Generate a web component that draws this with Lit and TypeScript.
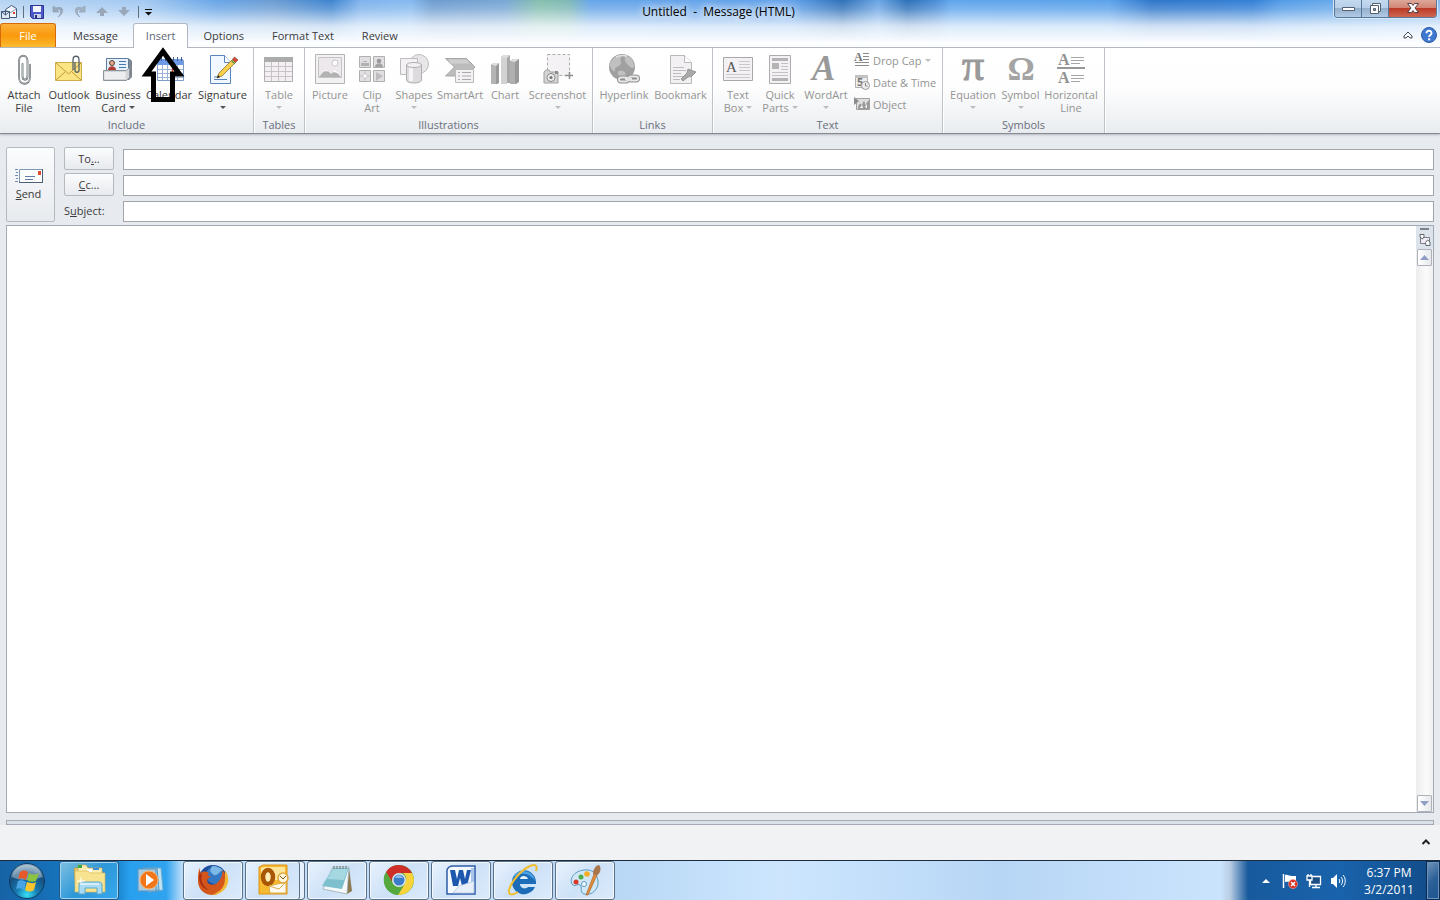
import { LitElement, html, css, svg, nothing } from "lit";
import { customElement, property } from "lit/decorators.js";
import { classMap } from "lit/directives/class-map.js";

/* 32px ribbon icons, 16px row icons */
const icons: Record<string, unknown> = {
  attach: svg`<g fill="none" stroke-linecap="round"><path d="M14.500 11v12c0 5 5 5 5 0V8c0-7-8.500-7-8.500 0v16c0 9 11 9 11 0V12" stroke="#5d6469" stroke-width="1.800"/><path d="M14.500 11v12c0 5 5 5 5 0V8c0-7-8.500-7-8.500 0v16c0 9 11 9 11 0V12" stroke="#d5dadd" stroke-width=".7"/></g>`,
  outlook: svg`<path d="M2.500 9.500h26v18h-26z" fill="#fbe583" stroke="#d0ac4a"/><path d="M3 10l12.500 11L28 10M3 27l9-8M28 27l-9-8" fill="none" stroke="#c09a3a"/><path d="M22 9v8c0 3 4 3 4 0V7c0-5-6-5-6 0v10" fill="none" stroke="#56616b" stroke-width="1.300"/>`,
  card: svg`<path d="M6 6h22l2 2v16l-3 3H9z" fill="#7e8790"/><path d="M4.500 5.500h22v16h-22z" fill="#e4f0fb" stroke="#5f7c9c"/><circle cx="10" cy="10" r="2.500" fill="#e0a488" stroke="#5b4438"/><path d="M6 17c0-5 8-5 8 0z" fill="#b43c34"/><path d="M17 8.500h7M17 11.500h7M17 14.500h7" stroke="#4a77ad"/><path d="M1.500 17.500h23l3-3v10l-3 3h-23z" fill="#d3d6d9" stroke="#8d949a"/><path d="M2.500 19h21v7h-21z" fill="#eceeef"/>`,
  calendar: svg`<path d="M4.500 7.500h26v20h-26z" fill="#fff" stroke="#7f9bc9"/><path d="M5 6h25v6H5z" fill="#6d9be6"/><path d="M5 16.500h25M5 20.500h25M5 24.500h25M9.500 12v15M14.500 12v15M19.500 12v15M24.500 12v15" stroke="#9cb2d4"/><path d="M8.500 4v4M12.500 4v4M16.500 4v4M20.500 4v4M24.500 4v4M28.500 4v4" stroke="#445f96"/><path d="M19.500 16.500h5v4h-5z" fill="#fff" stroke="#e0492f" stroke-width="1.500"/>`,
  signature: svg`<path d="M3.500 2.500h14l6 7v21h-20z" fill="#f2f8ff" stroke="#5c84bd"/><path d="M17.500 2.500v7h6" fill="#fff" stroke="#5c84bd"/><path d="M7 26.500h13M7 24h5" stroke="#5c84bd"/><path d="M10 25l2-5L26 6l3 3-14 14z" fill="#f8d04e" stroke="#93722c" stroke-width=".8"/><path d="M25.500 6.500l2-2.500 3.500 3-2.500 2.500z" fill="#d6483c" stroke="#8a4b2f" stroke-width=".7"/><path d="M24.500 7.500l3 3" stroke="#4d8d5e" stroke-width="1.300"/><path d="M10 25l1-3 2 2z" fill="#222"/>`,
  table: svg`<path d="M1.500 5.500h28v23h-28z" fill="#f3eff2" stroke="#b0b0b0"/><path d="M1 4h29v5H1z" fill="#ababab"/><path d="M2 13.500h27M2 18.500h27M2 23.500h27M8.500 9v19M15.500 9v19M22.500 9v19" stroke="#c6c3c6"/>`,
  picture: svg`<path d="M1.500 1.500h29v29h-29z" fill="#f4f1f4" stroke="#b4b4b4"/><path d="M4.500 4.500h23v20h-23z" fill="#ece8ec" stroke="#c4c4c4"/><circle cx="21" cy="10" r="3" fill="#fff" stroke="#c8c8c8"/><path d="M5 24l7-8 5 5 4-3 6 6z" fill="#b2b2b2"/><path d="M9 19l3-3 3 3-3-1zM19 19l2-2 3 3z" fill="#fff"/>`,
  clip: svg`<g fill="#e2dfe2" stroke="#b0b0b0"><path d="M3.500 3.500h11v11h-11zM17.500 3.500h11v11h-11zM3.500 17.500h11v11h-11zM17.500 17.500h11v11h-11z"/></g><path d="M5 10h8v3H5zM7 8h4v1H7z" fill="#b0b0b0"/><circle cx="23" cy="8" r="2.300" fill="#999"/><path d="M19 14c0-5 8-5 8 0z" fill="#a3a3a3"/><path d="M9 18.500l1 3.500 3.500 1-3.500 1-1 3.500-1-3.500-3.500-1 3.500-1z" fill="#fff" stroke="#aaa" stroke-width=".5"/><path d="M20 19l7 4-7 5z" fill="#bcbcbc"/>`,
  shapes: svg`<circle cx="21" cy="11" r="9.500" fill="#e9e6e9" stroke="#bcbcbc"/><path d="M2.500 5.500h17v16h-17z" fill="#f4f1f4" stroke="#bcbcbc"/><path d="M8.500 12v15c0 4 15 4 15 0V12z" fill="#dedbde" stroke="#b0b0b0"/><path d="M11 14v14h4V14z" fill="#f6f4f6"/><ellipse cx="16" cy="12" rx="7.500" ry="2.500" fill="#f3f0f3" stroke="#b0b0b0"/>`,
  smart: svg`<path d="M1.500 5.500h21l8.500 8.500-8 9H1.500l9-9z" fill="#bcbcbc" stroke="#a8a8a8"/><path d="M4 6.500h18l4 4H7z" fill="#cfcfcf"/><path d="M11.500 16.500h18v13h-18z" fill="#f4f1f4" stroke="#bbb"/><path d="M14 19.500h2M18 19.500h9M14 23h2M18 23h9M14 26.500h2M18 26.500h9" stroke="#aaa"/>`,
  chart: svg`<path d="M2 12l3-2h5v20l-2 1H2z" fill="#999"/><path d="M2 13h5v18H2z" fill="#b4b4b4"/><path d="M12 4l3-2h6v28h-9z" fill="#a8a8a8"/><path d="M12 4h6v27h-6z" fill="#d2d2d2"/><path d="M21 8l3-2h6v23l-3 2h-6z" fill="#999"/><path d="M21 8h5v23h-5z" fill="#b0b0b0"/><path d="M2 12l3-2h5l-3 3zM12 4l3-2h6l-3 3zM21 8l3-2h6l-4 3z" fill="#dedede"/>`,
  shot: svg`<path d="M5.500 1.500h22v21h-22z" fill="#f5f2f5" stroke="#adadad" stroke-dasharray="3 2"/><path d="M23 22.500h8M27.500 19v7" stroke="#8f8f8f" stroke-width="1.600"/><path d="M2 19l2-2h3l1 2h8v11H2z" fill="#d4d4d4" stroke="#a0a0a0"/><circle cx="9" cy="24.500" r="4" fill="#eee" stroke="#8a8a8a"/><circle cx="9" cy="24.500" r="1.600" fill="#777"/><path d="M13 18h3v3h-3z" fill="#8e8e8e"/>`,
  link: svg`<circle cx="14" cy="14" r="13" fill="#a0a0a0"/><path d="M5 6c5-5 10-4 8-1s2 4-1 7-5 1-5 5-5-2-5-5 1-4 3-6zM17 3c6 0 9 6 9 10s-4 1-6-1-4-4-3-9zM11 18c5-1 8 2 6 5s-5 3-6 0-2-4 0-5z" fill="#c0c0c0"/><path d="M8 4c4-2 7-2 11-1" stroke="#e2e2e2" fill="none" stroke-width="1.500"/><g fill="none" stroke="#8f8f8f" stroke-width="4"><rect x="11" y="24.500" width="9" height="4" rx="2"/><rect x="21" y="23.500" width="9" height="4" rx="2"/></g><g fill="none" stroke="#e6e6e6" stroke-width="2"><rect x="11" y="24.500" width="9" height="4" rx="2"/><rect x="21" y="23.500" width="9" height="4" rx="2"/><path d="M17 26h7"/></g>`,
  bookmark: svg`<path d="M5.500 2.500h14l7 7v21h-21z" fill="#f3f0f3" stroke="#b9b9b9"/><path d="M19.500 2.500v7h7" fill="#fff" stroke="#b9b9b9"/><path d="M8 14.500h11M8 17.500h13M8 20.500h8M8 23.500h10M8 26.500h7" stroke="#bdbdbd"/><path d="M16 26l6-6 1-4 8 3-4 4-4 1-5 4z" fill="#a9a9a9" stroke="#979797"/>`,
  textbox: svg`<path d="M1.500 4.500h29v23h-29z" fill="#f4f1f4" stroke="#a8a8a8"/><text x="4" y="19" class="serif" font-size="15" fill="#555">A</text><path d="M17 8.500h11M17 11.500h11M17 14.500h11M17 17.500h11M4 21.500h24M4 24.500h24" stroke="#cbc8cb"/>`,
  quick: svg`<path d="M5.500 2.500h21v28h-21z" fill="#f4f1f4" stroke="#adadad"/><path d="M8 5h16v3H8zM8 10h7v6H8zM8 25h16v3H8z" fill="#b4b4b4"/><path d="M17 10.500h7M17 13.500h7M17 16.500h7M8 19.500h16M8 22.500h16" stroke="#c2c2c2"/>`,
  wordart: svg`<text x="2" y="27" class="serif" font-size="35" font-style="italic" font-weight="bold" fill="#999">A</text>`,
  pi: svg`<text x="16" y="27" text-anchor="middle" class="serif" font-size="44" fill="#999" stroke="#999">π</text>`,
  omega: svg`<text x="16" y="27" text-anchor="middle" class="serif" font-size="34" font-weight="bold" fill="#a4a4a4">Ω</text>`,
  hline: svg`<text x="3" y="12" class="serif" font-size="16" font-weight="bold" fill="#929292">A</text><text x="3" y="30" class="serif" font-size="16" font-weight="bold" fill="#929292">A</text><path d="M2 15h28" stroke="#979797" stroke-width="2"/><path d="M16 4.500h13M16 7.500h13M16 10.500h9M16 22.500h13M16 25.500h13M16 28.500h9" stroke="#a6a6a6"/>`,
  dropcap: svg`<text x="0" y="9" class="serif" font-size="12" font-weight="bold" fill="#777">A</text><path d="M9 1.500h6M9 4.500h6M9 7.500h6M1 10.500h14M1 13.500h14" stroke="#8a8a8a"/>`,
  date: svg`<path d="M1.500 1.500h12v12h-12z" fill="#eee" stroke="#b0b0b0"/><path d="M1 1h13v3H1z" fill="#c2c2c2"/><text x="3" y="12" font-size="11" font-weight="bold" fill="#777">5</text><circle cx="11.500" cy="11.500" r="4" fill="#eee" stroke="#9a9a9a"/><path d="M11.500 9v3h2" stroke="#888" fill="none"/>`,
  object: svg`<path d="M2.500 2.500h13v11h-13z" fill="#dedede" stroke="#a0a0a0"/><path d="M0 1l5 4-5 4z" fill="#8c8c8c"/><path d="M4 13c0-5 3-7 4-3 1-6 3-6 3-1l4-5v9z" fill="#9a9a9a"/><path d="M6 12l2-3 1 3zM11 11l2-3v4z" fill="#fff"/>`,
};

type Cmd = { id: string; icon: string; lines: string[]; drop?: boolean; w: number };
type Group = { name: string; enabled?: boolean; cmds: Cmd[]; rows?: Cmd[] };

const groups: Group[] = [
  { name: "Include", enabled: true, cmds: [
    { id: "attach", icon: "attach", lines: ["Attach", "File"], w: 42 },
    { id: "item", icon: "outlook", lines: ["Outlook", "Item"], w: 48 },
    { id: "card", icon: "card", lines: ["Business", "Card"], drop: true, w: 50 },
    { id: "calendar", icon: "calendar", lines: ["Calendar"], w: 52 },
    { id: "signature", icon: "signature", lines: ["Signature"], drop: true, w: 55 },
  ] },
  { name: "Tables", cmds: [{ id: "table", icon: "table", lines: ["Table"], drop: true, w: 44 }] },
  { name: "Illustrations", cmds: [
    { id: "picture", icon: "picture", lines: ["Picture"], w: 44 },
    { id: "clip", icon: "clip", lines: ["Clip", "Art"], w: 40 },
    { id: "shapes", icon: "shapes", lines: ["Shapes"], drop: true, w: 44 },
    { id: "smart", icon: "smart", lines: ["SmartArt"], w: 48 },
    { id: "chart", icon: "chart", lines: ["Chart"], w: 42 },
    { id: "shot", icon: "shot", lines: ["Screenshot"], drop: true, w: 63 },
  ] },
  { name: "Links", cmds: [
    { id: "link", icon: "link", lines: ["Hyperlink"], w: 56 },
    { id: "bookmark", icon: "bookmark", lines: ["Bookmark"], w: 57 },
  ] },
  { name: "Text", cmds: [
    { id: "textbox", icon: "textbox", lines: ["Text", "Box"], drop: true, w: 44 },
    { id: "quick", icon: "quick", lines: ["Quick", "Parts"], drop: true, w: 40 },
    { id: "wordart", icon: "wordart", lines: ["WordArt"], drop: true, w: 52 },
  ], rows: [
    { id: "dropcap", icon: "dropcap", lines: ["Drop Cap"], drop: true, w: 87 },
    { id: "date", icon: "date", lines: ["Date & Time"], w: 87 },
    { id: "object", icon: "object", lines: ["Object"], w: 87 },
  ] },
  { name: "Symbols", cmds: [
    { id: "equation", icon: "pi", lines: ["Equation"], drop: true, w: 54 },
    { id: "symbol", icon: "omega", lines: ["Symbol"], drop: true, w: 41 },
    { id: "hline", icon: "hline", lines: ["Horizontal", "Line"], w: 60 },
  ] },
];

const reset = css`
  * { box-sizing: border-box; }
  button, input { font: inherit; color: inherit; margin: 0; }
  button { padding: 0; border: 0; background: none; }
  svg { display: block; flex: none; overflow: visible; }
`;

@customElement("ribbon-bar")
export class RibbonBar extends LitElement {
  static styles = [reset, css`
    :host { display: flex; height: 86px; background: linear-gradient(#fff 0, #fefefe 45%, #e9ecef 100%); border-bottom: 1px solid #868b91; box-shadow: 0 1px 2px #b4b9c0; position: relative; }
    .group { display: flex; flex-direction: column; padding: 0 3px; border-right: 1px solid #bec3ca; box-shadow: 1px 0 #fff; color: #949494; }
    .group.on { color: #3b3b3b; }
    .cmds { display: flex; flex: 1; }
    .cmd { display: flex; flex-direction: column; align-items: center; padding-top: 5px; line-height: 13px; white-space: nowrap; }
    .cmd svg { margin-bottom: 3px; }
    .line { display: flex; align-items: center; justify-content: center; gap: 3px; min-height: 13px; }
    .drop { border: 3px solid transparent; border-top-color: #bdbdbd; border-bottom: 0; }
    .on .drop { border-top-color: #555; }
    .rows { display: flex; flex-direction: column; padding-top: 1px; }
    .row { display: flex; align-items: center; gap: 3px; height: 22px; white-space: nowrap; padding-left: 2px; }
    .row .drop { margin-left: 1px; }
    .name { text-align: center; line-height: 17px; color: #6a6f7c; }
    .serif { font-family: "Liberation Serif", serif; }
  `];
  private big(c: Cmd, on: boolean) {
    const last = c.lines.length - 1;
    return html`<button class="cmd" id=${c.id} aria-disabled=${on ? "false" : "true"} style="width:${c.w}px">
      <svg width="32" height="32" viewBox="0 0 32 32" aria-hidden="true">${icons[c.icon]}</svg>
      ${c.lines.map((l, i) => html`<span class="line">${l}${i === last && i > 0 && c.drop ? html`<span class="drop"></span>` : nothing}</span>`)}
      ${last === 0 && c.drop ? html`<span class="line"><span class="drop"></span></span>` : nothing}
    </button>`;
  }
  render() {
    return groups.map((g) => html`<section class=${classMap({ group: true, on: !!g.enabled })} aria-label=${g.name}>
      <div class="cmds">
        ${g.cmds.map((c) => this.big(c, !!g.enabled))}
        ${g.rows ? html`<div class="rows">${g.rows.map((r) => html`<button class="row" id=${r.id} aria-disabled="true" style="width:${r.w}px">
          <svg width="16" height="16" viewBox="0 0 16 16" aria-hidden="true">${icons[r.icon]}</svg>
          <span>${r.lines[0]}</span>${r.drop ? html`<span class="drop"></span>` : nothing}</button>`)}</div>` : nothing}
      </div>
      <div class="name">${g.name}</div>
    </section>`);
  }
}

/* 32px program icons */
const apps: { id: string; label: string; kind: string; art: unknown }[] = [
  { id: "explorer", label: "Windows Explorer", kind: "lit", art: svg`<path d="M1 4h12l2 3h14v20H3z" fill="#e9c868" stroke="#b9963c" stroke-width=".7"/><path d="M5 1h8l2 3h14v20H5z" fill="#fbeeb0" stroke="#cba950" stroke-width=".7"/><path d="M5 1h4v3H5z" fill="#35a947"/><path d="M14 5h5v3h-5z" fill="#fff"/><path d="M20 4h6v2h-6z" fill="#3b8ad6"/><path d="M2 7h13l2 2h15v19H2z" fill="#f8e490" stroke="#d8bb60" stroke-width=".7"/><path d="M6 30V21c0-2 1-3 3-3h17c2 0 3 1 3 3v9h-5v-6H12v6z" fill="#a9dcf4" stroke="#5ba7ce"/><path d="M9 20h17" stroke="#fff"/><path d="M8 13v8M4 17h8" stroke="#fff"/>` },
  { id: "wmp", label: "Windows Media Player", kind: "glow", art: svg`<path d="M12 4h14l2 22-14 2z" fill="#bfe3f6" stroke="#6fa9cb"/><path d="M8 4h14l2 22H8z" fill="#9fd2ef" stroke="#5a9ac2"/><path d="M3 5h18v22H3z" fill="#a9cbe2" stroke="#5b93bb"/><circle cx="14" cy="16" r="9" fill="#f0761a" stroke="#fbb36f"/><path d="M11 10l8 6-8 6z" fill="#fff"/>` },
  { id: "firefox", label: "Firefox", kind: "", art: svg`<circle cx="16" cy="15" r="14" fill="#1f4d9a"/><circle cx="18" cy="11" r="9" fill="#3579c4"/><path d="M15 2c5 0 8 2 11 4-3 1-4 4-7 5s-4-2-6-4z" fill="#7db9e6"/><path d="M3 4c0 3 0 4 1 5 3-3 7-1 8 0-2 1-1 3 2 4-3 1-5 3-3 6 3 3 8 2 10-1 3-3 5-7 4-12 3 3 5 6 5 10 0 8-7 15-14 15C7 31 1 25 1 17c0-5 0-10 2-13z" fill="#d4561b"/><path d="M28 6c5 7 4 15-1 20-4 4-9 5-12 5 8-3 13-8 13-16z" fill="#f2b83a"/><path d="M3 7c0 2 1 3 2 4-2 5 1 12 7 15-7-1-10-8-10-13z" fill="#a92f12"/>` },
  { id: "outlook", label: "Outlook", kind: "stack", art: svg`<path d="M2 3l4-2h24v29H2z" fill="#f6b930" stroke="#dd9414"/><path d="M4 4l3-1h21v13H4z" fill="#fde59a"/><ellipse cx="11" cy="13" rx="5" ry="7" fill="#fdeeb8" stroke="#a95605" stroke-width="4.500"/><path d="M12 22l17-4v11H13z" fill="#fffaf0" stroke="#dfae4c"/><path d="M12 22l10 3 7-7" fill="none" stroke="#dfae4c"/><circle cx="26" cy="14" r="5" fill="#fff5dd" stroke="#e0a63c" stroke-width="1.500"/><path d="M23 12l3 3 3-3" fill="none" stroke="#8a5a14"/>` },
  { id: "notepad", label: "Notepad", kind: "", art: svg`<path d="M28 4l3 23-5 3z" fill="#8b7a52"/><path d="M12 3h16l-2 27L2 25z" fill="#f5f9fa" stroke="#93a1a7" stroke-width=".7"/><path d="M12 4h16l-7 21L1 22z" fill="#7dbfcd"/><path d="M12 5h15l-4 11L6 15z" fill="#a5d8e1"/><path d="M13 2v3M16 2v3M19 2v3M22 2v3M25 2v3" stroke="#6b7479"/>` },
  { id: "chrome", label: "Chrome", kind: "", art: svg`<circle cx="16" cy="16" r="15" fill="#4fae45"/><path d="M10 19.500L3 8A15 15 0 0 1 29 9H16a7 7 0 0 0-6 10z" fill="#cf2e28"/><path d="M29 9a15 15 0 0 1-14 22l7-12a7 7 0 0 0-2-10z" fill="#f8d33b"/><path d="M3 8l7 11.500c2 4 7 4 12 0L15 31A15 15 0 0 1 3 8z" fill="#56a93f"/><circle cx="16" cy="16" r="7" fill="#dfe6ec"/><circle cx="16" cy="16" r="5.500" fill="#3c7cc9"/><path d="M12 14c1-4 7-4 8 0z" fill="#8ab8e8"/>` },
  { id: "word", label: "Word", kind: "", art: svg`<path d="M2 6c1-3 3-4 6-4h22v28H2z" fill="#f4f9fe" stroke="#2d5ca8" stroke-width="1.500"/><path d="M26 4h3v24h-3z" fill="#a9c5ea"/><path d="M5 6h5l2 9 2-9h4l2 9 2-9h4l-4 16h-5l-2-8-2 8H8z" fill="#1d57ae"/><path d="M14 22l15-5v12H8z" fill="#e8eff9" stroke="#9db8dc" stroke-width=".6"/>` },
  { id: "ie", label: "Internet Explorer", kind: "", art: svg`<path d="M29 18a12 12 0 1 0-1 5h-7c-3 3-8 1-8-3h16z" fill="#1d6cb8"/><path d="M28 16a12 12 0 0 0-23-1c5-6 15-7 19-2z" fill="#4ba3e3"/><path d="M13 15c0-4 7-4 8 0z" fill="#e6f3fd"/><path d="M29 7c2-6-1-7-6-5C14 6 4 18 2 26c-1 6 4 5 9 2" fill="none" stroke="#f0bd2d" stroke-width="2"/>` },
  { id: "paint", label: "Paint", kind: "", art: svg`<path d="M15 6C5 7 0 15 3 20c3 4 5-1 8 1s-1 7 4 9c8 2 15-5 14-13S23 5 15 6z" fill="#cfe7f6" stroke="#5d9cc2"/><circle cx="7" cy="18" r="2.500" fill="#d8392b"/><circle cx="12" cy="13" r="2.500" fill="#4cae4a"/><circle cx="18" cy="10" r="2.800" fill="#f4ad25"/><circle cx="15" cy="20" r="2.500" fill="#f4fafe" stroke="#5d9cc2"/><path d="M17 31l8-21 3 1-9 20z" fill="#e08b3e" stroke="#a85f20" stroke-width=".6"/><path d="M24 10c0-5 3-9 6-9 3 3 1 9-2 10z" fill="#a8764a"/>` },
];

@customElement("task-bar")
export class TaskBar extends LitElement {
  @property() clock = "6:37 PM";
  @property() day = "3/2/2011";
  static styles = [reset, css`
    :host { display: flex; height: 40px; border-top: 1px solid #1c2b3d; color: #fff; font-size: 12px;
      background: linear-gradient(90deg, #1762a5 0, #1672bb 58px, #1b86cf 118px, #29a0ee 130px, #2fa3ef 166px, #b8dcf8 182px, #c5defa 300px, #b9d8f5 620px, #cde6fe 780px, #b7d6f5 1000px, #cbe4fd calc(100% - 220px), #b9cde4 calc(100% - 210px), #185a9d calc(100% - 192px), #1963ac calc(100% - 100px), #114a86 100%); }
    .start { width: 59px; padding-left: 9px; }
    .apps { display: flex; flex: 1; gap: 2px; align-items: stretch; }
    .app { width: 60px; border: 1px solid #5c7185; border-radius: 3px; display: flex; align-items: center; justify-content: center; padding-bottom: 2px; background: linear-gradient(135deg, #e8f2fd, #cde1f7 50%, #dcebfc); box-shadow: inset 0 0 0 1px #f2f8ff; }
    .lit { background: linear-gradient(135deg, #7fc0e2, #2d97d8 50%, #37a8ee); box-shadow: inset 0 0 0 1px #9fd5f3; border-color: #225a86; }
    .glow { background: none; border-color: transparent; box-shadow: none; }
    .stack { padding-right: 5px; box-shadow: inset -4px 0 #e6f1fd, inset -5px 0 #5c7185, inset 0 0 0 1px #f2f8ff; }
    .tray { display: flex; align-items: center; gap: 8px; padding-right: 7px; }
    .time { text-align: center; line-height: 17px; width: 60px; margin-left: 5px; }
    .peek { width: 14px; border: 1px solid #0b2c52; background: linear-gradient(135deg, #7396ba, #2c6098 50%, #1c5590); box-shadow: inset 0 0 0 1px #6d93bc; }
  `];
  render() {
    return html`
      <button class="start" aria-label="Start"><svg width="38" height="38" viewBox="0 0 38 38">
        <defs><radialGradient id="orb" cx=".5" cy=".9" r=".9"><stop offset="0" stop-color="#36e0f6"/><stop offset=".35" stop-color="#1779b0"/><stop offset=".7" stop-color="#164f7e"/><stop offset="1" stop-color="#9cb9cb"/></radialGradient></defs>
        <circle cx="18" cy="19" r="17.500" fill="url(#orb)" stroke="#0f3c60"/><path d="M3 15C5-1 31-1 33 15c-8 4-22 4-30 0z" fill="#fff" opacity=".35"/>
        <path d="M11 10c3-2 5-2 8 0l-2 8c-3-2-5-2-8-1z" fill="#e8592a"/><path d="M20 11c3 2 6 2 10 0l-3 8c-3 1-6 1-9-1z" fill="#8cc43f"/><path d="M9 19c3-1 5-1 8 1l-2 8c-3-2-5-2-8-1z" fill="#4aa3e4"/><path d="M18 20c3 1 6 2 9 0l-2 8c-3 2-6 2-9 0z" fill="#fbc52f"/></svg></button>
      <div class="apps">${apps.map((a) => html`<button class="app ${a.kind}" id=${a.id} aria-label=${a.label}><svg width="32" height="32" viewBox="0 0 32 32">${a.art}</svg></button>`)}</div>
      <div class="tray">
        <svg width="16" height="16" viewBox="0 0 16 16"><path d="M4 10l4-4 4 4z" fill="#fff"/></svg>
        <svg width="16" height="16" viewBox="0 0 16 16"><path d="M1.500 1v14" stroke="#fff" stroke-width="1.500"/><path d="M3 2c3-1 4 1 7 1h4v6c-4 1-6-1-11 0z" fill="#fff"/><circle cx="11" cy="11" r="4.500" fill="#d92d22" stroke="#f3b0aa" stroke-width=".6"/><path d="M9 9l4 4M13 9l-4 4" stroke="#fff" stroke-width="1.600"/></svg>
        <svg width="16" height="16" viewBox="0 0 16 16"><path d="M4.500 3.500h10v8h-10z" fill="#1d4f86" stroke="#fff" stroke-width="1.300"/><path d="M10 12v2M6 14.500h8" stroke="#fff" stroke-width="1.300"/><path d="M1 3h5v4H1zM2 1v2M5 1v2M3.500 7v7" fill="#1d4f86" stroke="#fff" stroke-width="1.300"/></svg>
        <svg width="16" height="16" viewBox="0 0 16 16"><path d="M1 5h2l4-4v14l-4-4H1z" fill="#fff"/><path d="M9 6c1 1 1 3 0 4M11 4c2 2 2 6 0 8M13 2c3 3 3 9 0 12" fill="none" stroke="#fff"/></svg>
        <div class="time"><div>${this.clock}</div><div>${this.day}</div></div>
      </div>
      <button class="peek" aria-label="Show desktop"></button>`;
  }
}

@customElement("app-root")
export class AppRoot extends LitElement {
  private tabs = ["Message", "Insert", "Options", "Format Text", "Review"];
  static styles = [reset, css`
    :host { display: flex; flex-direction: column; height: 100vh; min-height: 500px; position: relative; overflow: hidden; background: #e7ebf0; color: #3b3b3b; font: 11px/13px "Open Sans", "Noto Sans", sans-serif; }
    .top { height: 48px; flex: none; display: flex; flex-direction: column; border-bottom: 1px solid #b3b8c0;
      background: linear-gradient(180deg, transparent 0, rgba(255,255,255,.2) 20%, rgba(250,252,255,.8) 56%, #fbfdff 90%),
        linear-gradient(90deg, #b5d3f2 0, #a3c9f2 10%, #68a5e6 15%, #6a9cd3 19%, #3e84cf 23%, #7eb2ec 25%, #85b9ef 28.500%, #6d9cd0 30%, #78a6d5 35%, #85bfae 37.500%, #7eb8b7 39.500%, #66a5e8 41%, #62a2ea 55%, #2f70b7 58.500%, #6ca6e5 61%, #2d70b8 63%, #4a8dd6 65%, #5fa5ec 66%, #5ca2ea 77%, #2e76ca 80%, #3480d6 87%, #529be6 89%, #68a9ea 93%, #85b9f0 100%); }
    .title { display: grid; grid-template-columns: 1fr auto 1fr; height: 24px; padding-right: 3px; }
    .quick { display: flex; align-items: center; gap: 6px; }
    .bar { width: 1px; height: 12px; background: #5f6f80; }
    .caption { align-self: center; color: #000; font-size: 12px; line-height: 16px; margin: 0; font-weight: 400; white-space: pre; text-shadow: 0 0 8px #fff, 0 0 8px #fff; }
    .wins { display: flex; justify-self: end; height: 18px; border: 1px solid #56789b; border-top: 0; border-radius: 0 0 4px 4px; box-shadow: 0 0 0 1px #d7e8fa; overflow: hidden; }
    .win { width: 27px; display: grid; place-items: center; padding-bottom: 1px; background: linear-gradient(#c3d9ef, #b7cfe8 45%, #94b0cd 50%, #b2cae4); border-right: 1px solid #56789b; }
    .win.close { width: 47px; border: 0; background: linear-gradient(#dda99b, #d28574 45%, #bb3b28 50%, #cf6650); }
    .tabs { display: flex; height: 24px; align-items: stretch; }
    .file { width: 56px; color: #fff; border: 1px solid #d66a08; border-radius: 3px 3px 0 0; border-bottom: 0; margin-right: 3px; background: linear-gradient(#fbb03c, #f99a0c 50%, #fdbb2f); }
    .tab { padding: 0 14px; }
    .tab.on { padding: 0 12px 2px; margin: 0 1px; height: 25px; background: #fff; border: 1px solid #b3b8c0; border-bottom: 0; border-radius: 3px 3px 0 0; position: relative; z-index: 2; color: #5d6675; }
    .help { display: flex; align-items: center; gap: 8px; margin-left: auto; padding-right: 3px; }
    ribbon-bar { flex: none; }
    .head { display: grid; grid-template-columns: 49px 50px 1fr; column-gap: 9px; row-gap: 3px; padding: 13px 6px 3px; align-items: end; }
    .btn { border: 1px solid #b5bac0; border-radius: 2px; background: linear-gradient(#fbfcfd, #eff1f4 60%, #e8ebee); height: 23px; }
    .send { grid-row: span 3; height: 100%; display: flex; flex-direction: column; align-items: center; justify-content: center; gap: 3px; padding: 0 4px 1px 0; }
    .send svg { align-self: end; margin-right: 6px; }
    .field { width: 100%; height: 21px; border: 1px solid #a2a6ab; background: #fff; padding: 0 3px; outline: 0; border-radius: 0; }
    .label { line-height: 23px; }
    .body { flex: 1; min-height: 0; display: flex; margin: 0 6px; border: 1px solid #a3aab5; background: #fff; }
    .text { flex: 1; border: 0; outline: 0; resize: none; background: #fff; padding: 8px; font: inherit; }
    .scroll { width: 17px; display: flex; flex-direction: column; align-items: end; justify-content: space-between; background: linear-gradient(90deg, #ececec, #fbfbfb 60%, #f0f0f0); }
    .ruler { width: 17px; background: #dde3eb; display: flex; flex-direction: column; align-items: center; gap: 4px; padding: 2px 0 3px; }
    .split { width: 9px; height: 2px; background: #7b828a; }
    .arrow { width: 15px; height: 17px; margin: 0 1px; border: 1px solid #aeb2b8; border-radius: 1px; background: linear-gradient(90deg, #fff, #e6e8eb); display: grid; place-items: center; }
    .pane { margin: 7px 6px 0; height: 5px; border: 1px solid #a3aab5; background: #dbe1e8; }
    .foot { height: 35px; background: #f1f2f4; display: flex; justify-content: end; align-items: center; padding: 0 9px 2px 0; }
    task-bar { flex: none; }
    .pointer { position: absolute; left: 141px; top: 45px; z-index: 5; pointer-events: none; }
  `];
  render() {
    return html`
      <header class="top">
        <div class="title">
          <div class="quick">
            <svg width="17" height="16" viewBox="0 0 17 16"><path d="M5.500 5.500l6-4 5 3v9h-11z" fill="#f3f7fb" stroke="#44597a"/><path d="M6 6l4 3 6-4" fill="none" stroke="#8c9db2"/><path d="M13 8h2v2h-2z" fill="#d63c2c"/><path d="M1.500 7.500h8v7h-8zM1.500 7.500L5.500 11l4-3.500" fill="#dfe9f4" stroke="#44597a"/></svg>
            <span class="bar"></span>
            <svg width="14" height="14" viewBox="0 0 14 14"><path d="M.5.5h13v13h-11l-2-2z" fill="#4c5ac9" stroke="#2c3594"/><path d="M3 1h8v6H3z" fill="#f2f5fc"/><path d="M4 9h7v4H4z" fill="#c9d2e6"/><path d="M5 10h2v3H5z" fill="#28307c"/></svg>
            <svg width="16" height="16" viewBox="0 0 16 16"><path d="M3 2v6h6L7 6c3-2 6 2 1 7 7-4 6-12-2-9z" fill="#9aa9bb" stroke="#8a98ab" stroke-width=".6"/></svg>
            <svg width="16" height="16" viewBox="0 0 16 16"><path d="M13 2v6H7l2-2C6 4 3 8 8 13 1 9 2 1 10 4z" fill="#a3b2c3" stroke="#8b9aad" stroke-width=".6"/></svg>
            <svg width="16" height="16" viewBox="0 0 16 16"><path d="M8 3l6 6h-4v3H6V9H2z" fill="#9aa7b8"/></svg>
            <svg width="16" height="16" viewBox="0 0 16 16"><path d="M8 12l6-6h-4V3H6v3H2z" fill="#9aa7b8"/></svg>
            <span class="bar"></span>
            <svg width="9" height="8" viewBox="0 0 9 8"><path d="M0 1.500h7" stroke="#111"/><path d="M0 4h7L3.500 7.500z" fill="#111"/></svg>
          </div>
          <h1 class="caption">Untitled  -  Message (HTML)</h1>
          <div class="wins">
            <button class="win" aria-label="Minimize"><svg width="13" height="6" viewBox="0 0 13 6"><path d="M.5 2.500h12v3H.5z" fill="#fff" stroke="#53606f"/></svg></button>
            <button class="win" aria-label="Restore"><svg width="13" height="13" viewBox="0 0 13 13"><path d="M3.500 1.500h8v8h-8z" fill="#fff" stroke="#53606f"/><path d="M1.500 3.500h8v8h-8z" fill="#fff" stroke="#53606f"/><path d="M4.500 6.500h2v2h-2z" fill="#8ca7c5" stroke="#53606f"/></svg></button>
            <button class="win close" aria-label="Close"><svg width="14" height="12" viewBox="0 0 14 12"><path d="M1.500 1.500h4L7 3.500l1.500-2h4L9 6l3.500 4.500h-4L7 8.500l-1.500 2h-4L5 6z" fill="#fff" stroke="#55404a"/></svg></button>
          </div>
        </div>
        <nav class="tabs">
          <button class="file">File</button>
          ${this.tabs.map((t) => html`<button class=${classMap({ tab: true, on: t === "Insert" })}>${t}</button>`)}
          <div class="help">
            <svg width="10" height="9" viewBox="0 0 10 9"><path d="M5 1L1 5v2h2l2-2 2 2h2V5z" fill="#fff" stroke="#3f4855"/></svg>
            <svg width="16" height="16" viewBox="0 0 16 16" role="img" aria-label="Help"><circle cx="8" cy="8" r="7.500" fill="#3f78cf" stroke="#2c5dab"/><path d="M5.500 6.300c0-3.600 5.300-3.300 5 0-.2 1.700-2.300 1.700-2.400 3.700" fill="none" stroke="#fff" stroke-width="1.900"/><path d="M7 11.300h2.200v2H7z" fill="#fff"/></svg>
          </div>
        </nav>
      </header>
      <ribbon-bar></ribbon-bar>
      <form class="head">
        <button type="button" class="btn send"><svg width="30" height="16" viewBox="0 0 30 16"><path d="M5.500 1.500h23v13h-23z" fill="#fbfdff" stroke="#7e99b6"/><path d="M5 14.500h24M28.500 1v14" stroke="#4c6076"/><path d="M24 3h3v4h-3z" fill="#df4a2e"/><path d="M11 8.500h10M11 11.500h8" stroke="#5f7da8"/><path d="M1 1.500h3M2 4.500h2M1 7.500h3M2 10.500h2M1 13.500h3" stroke="#6f8cb5"/></svg><span><u>S</u>end</span></button>
        <button type="button" class="btn" id="to">To<u>.</u>..</button><input class="field" aria-labelledby="to">
        <button type="button" class="btn" id="cc"><u>C</u>c...</button><input class="field" aria-labelledby="cc">
        <label class="label" for="subject">S<u>u</u>bject:</label><input class="field" id="subject">
      </form>
      <main class="body">
        <textarea class="text" aria-label="Message body"></textarea>
        <div class="scroll">
          <div>
            <div class="ruler"><span class="split"></span><svg width="12" height="12" viewBox="0 0 12 12"><path d="M1.500 3.500h9v6h-9z" fill="#f0eef2" stroke="#777e87"/><path d="M1 .5h4v2L3.500 5 1 3zM6.500 8.500l2-2.500 2.500 2v3.500H7z" fill="#fff" stroke="#5e656d"/></svg></div>
            <button class="arrow" aria-label="Scroll up"><svg width="9" height="5" viewBox="0 0 9 5"><path d="M0 5l4.500-5L9 5z" fill="#8f9fc4"/></svg></button>
          </div>
          <button class="arrow" aria-label="Scroll down"><svg width="9" height="5" viewBox="0 0 9 5"><path d="M0 0l4.500 5L9 0z" fill="#8f9fc4"/></svg></button>
        </div>
      </main>
      <div class="pane"></div>
      <footer class="foot"><svg width="10" height="6" viewBox="0 0 10 6"><path d="M1.500 5L5 1.500 8.500 5" fill="none" stroke="#222" stroke-width="2"/></svg></footer>
      <task-bar></task-bar>
      <svg class="pointer" width="44" height="58" viewBox="0 0 44 58"><path d="M22 6.500l16.500 22.500h-7v25.500h-19V29h-7z" fill="none" stroke="#000" stroke-width="5"/></svg>`;
  }
}
